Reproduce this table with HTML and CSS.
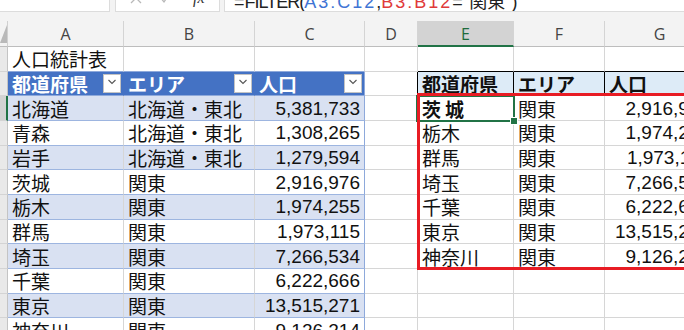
FILE: index.html
```html
<!DOCTYPE html>
<html lang="ja">
<head>
<meta charset="utf-8">
<title>人口統計表</title>
<link rel="stylesheet" href="styles.css">
</head>
<body>
<div class="app">
  <div class="topbar">
    <div class="namebox"></div>
    <div class="fxbox">
      <svg class="ic ic-x" width="12" height="12" viewBox="0 0 12 12"><path d="M1 1 L11 11 M11 1 L1 11" stroke="#b8b8b8" stroke-width="1.3" fill="none"/></svg>
      <svg class="ic ic-ok" width="12" height="12" viewBox="0 0 12 12"><path d="M1 5 L5 10 L11 1" stroke="#b8b8b8" stroke-width="1.3" fill="none"/></svg>
      <span class="fx">fx</span>
    </div>
    <div class="formula"><span class="ftext"><span class="feq">=</span><span class="ffn">FILTER(</span><span class="ref-a">A3:C12</span>,<span class="ref-b">B3:B12</span>="関東")</span></div>
  </div>

  <div class="sheet">
    <!-- column headers -->
    <div class="corner"><svg width="8" height="25" viewBox="0 0 8 25"><polygon points="7,4 7,22 0,22" fill="#b9b9b9"/></svg></div>
    <div class="ch">A</div><div class="ch">B</div><div class="ch">C</div><div class="ch">D</div><div class="ch ch-sel">E</div><div class="ch">F</div><div class="ch">G</div><div class="ch">H</div>

    <!-- row 1 -->
    <div class="rh"></div>
    <div class="c ttop">人口統計表</div><div class="c ttop"></div><div class="c ttop"></div><div class="c"></div>
    <div class="c ktop"></div><div class="c ktop"></div><div class="c ktop"></div><div class="c"></div>

    <!-- row 2 -->
    <div class="rh"></div>
    <div class="c th">都道府県<span class="btn"><svg width="10" height="6" viewBox="0 0 10 6"><path d="M1.5 1 L5 4.5 L8.5 1" fill="none" stroke="#555" stroke-width="1.1"/></svg></span></div>
    <div class="c th">エリア<span class="btn"><svg width="10" height="6" viewBox="0 0 10 6"><path d="M1.5 1 L5 4.5 L8.5 1" fill="none" stroke="#555" stroke-width="1.1"/></svg></span></div>
    <div class="c th tedge">人口<span class="btn"><svg width="10" height="6" viewBox="0 0 10 6"><path d="M1.5 1 L5 4.5 L8.5 1" fill="none" stroke="#555" stroke-width="1.1"/></svg></span></div>
    <div class="c kleft"></div>
    <div class="c rth">都道府県</div><div class="c rth">エリア</div><div class="c rth">人口</div><div class="c"></div>

    <!-- row 3 -->
    <div class="rh rh-cur"></div>
    <div class="c t band">北海道</div><div class="c t band">北海道・東北</div><div class="c t band tedge num">5,381,733</div><div class="c"></div>
    <div class="c bold">茨城</div><div class="c">関東</div><div class="c num">2,916,976</div><div class="c"></div>

    <!-- row 4 -->
    <div class="rh"></div>
    <div class="c t">青森</div><div class="c t">北海道・東北</div><div class="c t tedge num">1,308,265</div><div class="c"></div>
    <div class="c">栃木</div><div class="c">関東</div><div class="c num">1,974,255</div><div class="c"></div>

    <!-- row 5 -->
    <div class="rh"></div>
    <div class="c t band">岩手</div><div class="c t band">北海道・東北</div><div class="c t band tedge num">1,279,594</div><div class="c"></div>
    <div class="c">群馬</div><div class="c">関東</div><div class="c num">1,973,115</div><div class="c"></div>

    <!-- row 6 -->
    <div class="rh"></div>
    <div class="c t">茨城</div><div class="c t">関東</div><div class="c t tedge num">2,916,976</div><div class="c"></div>
    <div class="c">埼玉</div><div class="c">関東</div><div class="c num">7,266,534</div><div class="c"></div>

    <!-- row 7 -->
    <div class="rh"></div>
    <div class="c t band">栃木</div><div class="c t band">関東</div><div class="c t band tedge num">1,974,255</div><div class="c"></div>
    <div class="c">千葉</div><div class="c">関東</div><div class="c num">6,222,666</div><div class="c"></div>

    <!-- row 8 -->
    <div class="rh"></div>
    <div class="c t">群馬</div><div class="c t">関東</div><div class="c t tedge num">1,973,115</div><div class="c"></div>
    <div class="c">東京</div><div class="c">関東</div><div class="c num">13,515,271</div><div class="c"></div>

    <!-- row 9 -->
    <div class="rh"></div>
    <div class="c t band">埼玉</div><div class="c t band">関東</div><div class="c t band tedge num">7,266,534</div><div class="c"></div>
    <div class="c">神奈川</div><div class="c">関東</div><div class="c num">9,126,214</div><div class="c"></div>

    <!-- row 10 -->
    <div class="rh"></div>
    <div class="c t">千葉</div><div class="c t">関東</div><div class="c t tedge num">6,222,666</div><div class="c"></div>
    <div class="c"></div><div class="c"></div><div class="c"></div><div class="c"></div>

    <!-- row 11 -->
    <div class="rh"></div>
    <div class="c t band">東京</div><div class="c t band">関東</div><div class="c t band tedge num">13,515,271</div><div class="c"></div>
    <div class="c"></div><div class="c"></div><div class="c"></div><div class="c"></div>

    <!-- row 12 -->
    <div class="rh"></div>
    <div class="c t">神奈川</div><div class="c t">関東</div><div class="c t tedge num">9,126,214</div><div class="c"></div>
    <div class="c"></div><div class="c"></div><div class="c"></div><div class="c"></div>

    <!-- overlays -->
    <div class="selection"><span class="handle"></span></div>
    <div class="spill"></div>
  </div>
</div>
</body>
</html>
```
FILE: styles.css
```css
html, body {
  margin: 0;
  padding: 0;
  background: #ffffff;
}
body {
  width: 684px;
  height: 330px;
  overflow: hidden;
  font-family: "Noto Sans CJK JP", "Noto Sans", sans-serif;
}
.app {
  width: 684px;
  height: 330px;
  overflow: hidden;
}

/* ---------- formula bar ---------- */
.topbar {
  height: 21px;
  background: #f3f3f3;
  display: flex;
  align-items: flex-start;
  gap: 5px;
  box-sizing: border-box;
}
.namebox,
.fxbox,
.formula {
  height: 12px;
  box-sizing: border-box;
  background: #ffffff;
  border: 1px solid #dcdcdc;
  border-top: none;
  overflow: hidden;
}
.namebox {
  width: 110px;
  flex: none;
  border-left: none;
}
.fxbox {
  width: 105px;
  flex: none;
  display: flex;
  align-items: flex-start;
  padding-left: 14px;
}
.fxbox .ic {
  margin-top: -8px;
  flex: none;
}
.fxbox .ic-ok {
  margin-left: 17px;
}
.fx {
  margin-left: 22px;
  margin-top: -10px;
  font: italic 16px/16px "Liberation Serif", serif;
  color: #333;
}
.formula {
  flex: 1;
  margin-left: -1px;
  border-right: none;
  padding-left: 9px;
}
.ftext {
  display: block;
  margin-top: -7px;
  font: 18px/18px "Liberation Sans", "Noto Sans CJK JP", sans-serif;
  color: #222;
  white-space: nowrap;
}
.ffn { letter-spacing: -1px; }
.ref-a { color: #3e74d4; letter-spacing: 2px; }
.ref-b { color: #e03a3a; letter-spacing: 2px; }

/* ---------- sheet grid ---------- */
.sheet {
  position: relative;
  display: grid;
  grid-template-columns: 8px 116px 131px 110px 53px 96px 91px 110px 80px;
  grid-template-rows: 26px repeat(12, 24.67px);
  width: 795px;
}

.corner {
  background: #f3f3f3;
  border-right: 1px solid #d0d0d0;
  border-bottom: 1px solid #bdbdbd;
  box-sizing: border-box;
  overflow: hidden;
}
.corner svg { display: block; }

.ch {
  background: #f3f3f3;
  border-right: 1px solid #d4d4d4;
  border-bottom: 1px solid #bdbdbd;
  box-sizing: border-box;
  display: flex;
  align-items: center;
  justify-content: center;
  font: 16px/1 "Open Sans", "Noto Sans", sans-serif;
  color: #444;
  padding-top: 1px;
}
.ch-sel {
  background: #d3d3d3;
  color: #1d6b3c;
  border-bottom: 2px solid #217346;
}

.rh {
  background: #e9e9e9;
  border-right: 1px solid #c4c4c4;
  border-bottom: 1px solid #d4d4d4;
  box-sizing: border-box;
}
.rh-cur {
  background: #d3d3d3;
  border-right: 2px solid #217346;
}

.c {
  box-sizing: border-box;
  border-right: 1px solid #d6d6d6;
  border-bottom: 1px solid #d6d6d6;
  display: flex;
  align-items: center;
  padding: 0 3px 0 4px;
  font-size: 19px;
  line-height: 1;
  color: #111;
  white-space: nowrap;
  overflow: hidden;
  min-width: 0;
}
.num {
  justify-content: flex-end;
  font-family: "Liberation Sans", "Noto Sans CJK JP", sans-serif;
  padding-right: 4px;
}

/* left table (Excel table style) */
.ttop { border-bottom-color: #8ea9db; }
.t { border-bottom-color: #9db5e0; }
.band { background: #d9e1f2; }
.tedge { border-right-color: #8ea9db; }
.th {
  background: #4472c4;
  color: #ffffff;
  font-weight: 700;
  justify-content: space-between;
  padding-right: 2px;
  border-right-color: #4472c4;
  border-bottom-color: #8ea9db;
}
.th.tedge { border-right-color: #8ea9db; }
.btn {
  width: 18px;
  height: 19px;
  box-sizing: border-box;
  background: #ffffff;
  border: 1px solid #c3c3c3;
  display: flex;
  align-items: center;
  justify-content: center;
  flex: none;
}
.btn svg { display: block; margin-top: -2px; }

/* right spill table */
.ktop { border-bottom-color: #000; }
.kleft { border-right-color: #000; }
.rth {
  background: #ddebf7;
  font-weight: 700;
  border-right-color: #000;
  border-bottom-color: #000;
}
.bold {
  font-weight: 700;
  letter-spacing: 4px;
}

/* overlays */
.selection {
  position: absolute;
  left: 416px;
  top: 74px;
  width: 99px;
  height: 27px;
  box-sizing: border-box;
  border: 2px solid #217346;
}
.handle {
  position: absolute;
  right: -5px;
  bottom: -5px;
  width: 6px;
  height: 6px;
  background: #217346;
  border: 1px solid #ffffff;
}
.spill {
  position: absolute;
  left: 417px;
  top: 72px;
  width: 400px;
  height: 177px;
  box-sizing: border-box;
  border: 3px solid #e81c24;
}
```
